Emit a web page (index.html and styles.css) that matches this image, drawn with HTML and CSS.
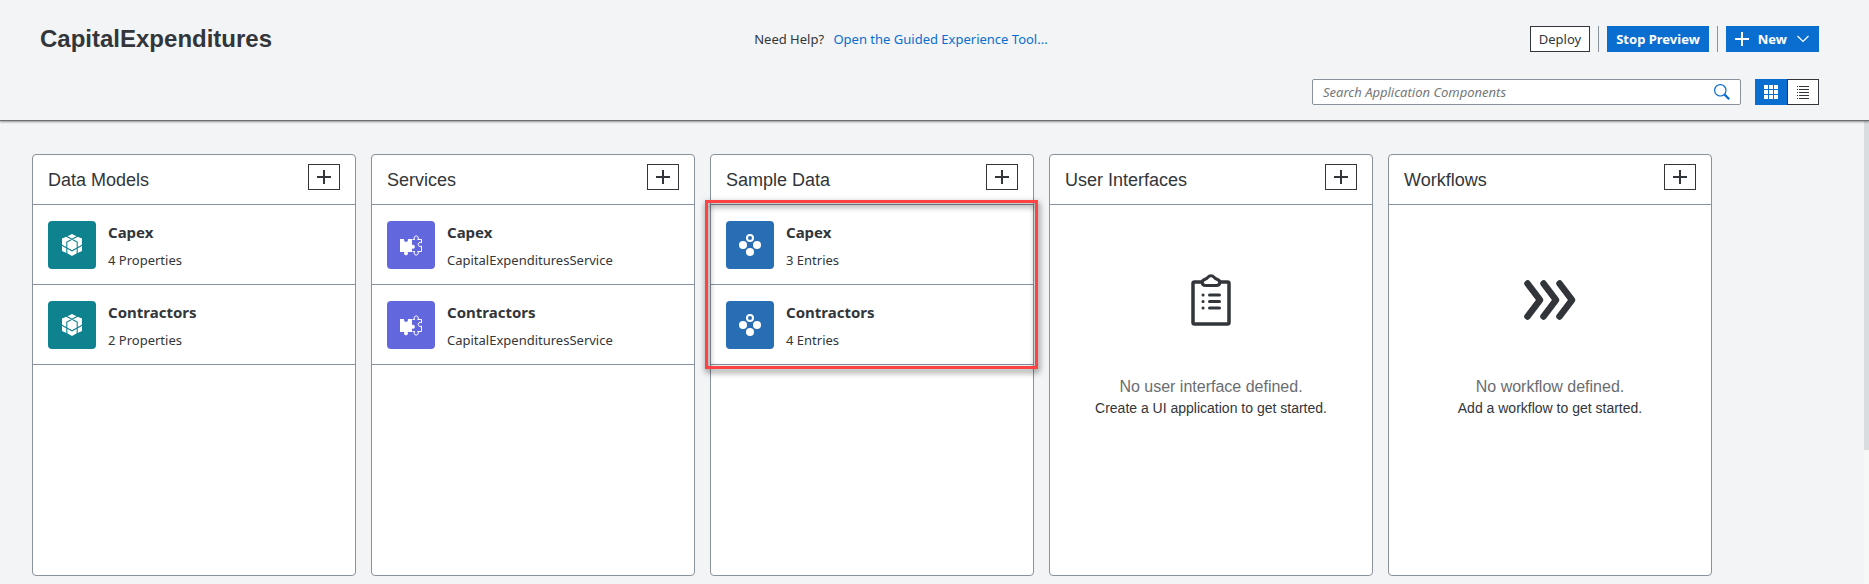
FILE: index.html
```html
<!DOCTYPE html>
<html lang="en">
<head>
<meta charset="utf-8">
<title>CapitalExpenditures</title>
<link rel="stylesheet" href="styles.css">
</head>
<body>
<svg class="defs" aria-hidden="true">
  <symbol id="plus" viewBox="0 0 14 14"><path d="M7 0v14M0 7h14" fill="none" stroke="currentColor" stroke-width="2"/></symbol>
  <symbol id="cube" viewBox="0 0 48 48">
    <path d="M24 13l4.500 2.200L34 17.500V30l-5 2.200L24 35l-5-2.800-5-2.200V17.500l5.500-2.300z" fill="#fff"/>
    <path d="M17.500 14.800L24 18.200l5.200 2.900v5.800L24 29.800l-5.200-2.900v-5.800L24 18.200l6.500-3.400M18.800 26.900v6M29.200 26.900v6M18.800 26.900L13.500 24M29.200 26.900L34.500 24" fill="none" stroke="#0f828f" stroke-width="1.100"/>
  </symbol>
  <symbol id="puzzle" viewBox="0 0 48 48">
    <path d="M13 18h4.200a2 2 0 1 0 3.600 0H25v6a2 2 0 1 1 0 3.600V31h-4.400a2 2 0 1 1-3.200 0H13z" fill="#fff"/>
    <path d="M25.500 18.500h2.200a2.100 2.100 0 1 1 3 0h3.800v3.200a2.100 2.100 0 1 0 0 3.400v5.400h-3.800a2.100 2.100 0 1 1-3 0h-2.200" fill="none" stroke="#fff" stroke-width="1"/>
  </symbol>
  <symbol id="entries" viewBox="0 0 48 48">
    <g fill="#fff"><circle cx="17" cy="24" r="4"/><circle cx="31" cy="24" r="4"/><circle cx="24" cy="31" r="4"/></g>
    <circle cx="24" cy="17" r="3" fill="none" stroke="#fff" stroke-width="2"/>
  </symbol>
</svg>

<header class="topbar">
  <div class="topbar-row">
    <h1 class="app-title">CapitalExpenditures</h1>
    <p class="help">Need Help? <a class="help-link" href="#">Open the Guided Experience Tool...</a></p>
    <div class="actions">
      <button class="btn" type="button">Deploy</button>
      <span class="sep"></span>
      <button class="btn btn-primary" type="button">Stop Preview</button>
      <span class="sep"></span>
      <button class="btn btn-primary btn-new" type="button">
        <svg class="plus" aria-hidden="true"><use href="#plus"/></svg>
        New
        <svg class="chevron" viewBox="0 0 14 8" aria-hidden="true"><path d="M1.500 1L7 6.500 12.500 1" fill="none" stroke="currentColor" stroke-width="1.200"/></svg>
      </button>
    </div>
  </div>
  <div class="tools">
    <div class="search">
      <input class="search-input" type="text" aria-label="Search Application Components" placeholder="Search Application Components">
      <button class="search-btn" type="button" aria-label="Search">
        <svg class="search-icon" viewBox="0 0 16 16" aria-hidden="true"><circle cx="6.300" cy="6.300" r="5.700" fill="none" stroke="currentColor" stroke-width="1.200"/><path d="M10.400 10.400l4.800 4.800" stroke="currentColor" stroke-width="2.200"/></svg>
      </button>
    </div>
    <div class="views">
      <button class="view view-on" type="button" aria-label="Grid view">
        <svg class="view-icon" viewBox="0 0 14 14" aria-hidden="true"><path d="M0 0h4v4H0zM5 0h4v4H5zM10 0h4v4h-4zM0 5h4v4H0zM5 5h4v4H5zM10 5h4v4h-4zM0 10h4v4H0zM5 10h4v4H5zM10 10h4v4h-4z" fill="currentColor"/></svg>
      </button>
      <button class="view" type="button" aria-label="List view">
        <svg class="view-icon" viewBox="0 0 14 14" aria-hidden="true"><path d="M1 1.500h1M3 1.500h10M1 4.500h1M3 4.500h10M1 7.500h1M3 7.500h10M1 10.500h1M3 10.500h10M1 13.500h1M3 13.500h10" stroke="currentColor"/></svg>
      </button>
    </div>
  </div>
</header>

<main class="board">
  <section class="card">
    <div class="card-head"><h2 class="card-title">Data Models</h2><button class="add" type="button" aria-label="Add data model"><svg class="plus" aria-hidden="true"><use href="#plus"/></svg></button></div>
    <ul class="list">
      <li class="item"><svg class="tile tile-model" aria-hidden="true"><use href="#cube"/></svg><div class="item-text"><h3 class="item-name">Capex</h3><p class="item-info">4 Properties</p></div></li>
      <li class="item"><svg class="tile tile-model" aria-hidden="true"><use href="#cube"/></svg><div class="item-text"><h3 class="item-name">Contractors</h3><p class="item-info">2 Properties</p></div></li>
    </ul>
  </section>
  <section class="card">
    <div class="card-head"><h2 class="card-title">Services</h2><button class="add" type="button" aria-label="Add service"><svg class="plus" aria-hidden="true"><use href="#plus"/></svg></button></div>
    <ul class="list">
      <li class="item"><svg class="tile tile-service" aria-hidden="true"><use href="#puzzle"/></svg><div class="item-text"><h3 class="item-name">Capex</h3><p class="item-info">CapitalExpendituresService</p></div></li>
      <li class="item"><svg class="tile tile-service" aria-hidden="true"><use href="#puzzle"/></svg><div class="item-text"><h3 class="item-name">Contractors</h3><p class="item-info">CapitalExpendituresService</p></div></li>
    </ul>
  </section>
  <section class="card">
    <div class="card-head"><h2 class="card-title">Sample Data</h2><button class="add" type="button" aria-label="Add sample data"><svg class="plus" aria-hidden="true"><use href="#plus"/></svg></button></div>
    <ul class="list list-marked">
      <li class="item"><svg class="tile tile-data" aria-hidden="true"><use href="#entries"/></svg><div class="item-text"><h3 class="item-name">Capex</h3><p class="item-info">3 Entries</p></div></li>
      <li class="item"><svg class="tile tile-data" aria-hidden="true"><use href="#entries"/></svg><div class="item-text"><h3 class="item-name">Contractors</h3><p class="item-info">4 Entries</p></div></li>
    </ul>
  </section>
  <section class="card">
    <div class="card-head"><h2 class="card-title">User Interfaces</h2><button class="add" type="button" aria-label="Add user interface"><svg class="plus" aria-hidden="true"><use href="#plus"/></svg></button></div>
    <div class="empty">
      <svg class="empty-icon" viewBox="0 0 56 56" aria-hidden="true">
        <g fill="none" stroke="currentColor" stroke-linejoin="round" stroke-linecap="round">
          <path d="M19 10h-7.500a1.500 1.500 0 0 0-1.500 1.500v39a1.500 1.500 0 0 0 1.500 1.500h33a1.500 1.500 0 0 0 1.500-1.500v-39a1.500 1.500 0 0 0-1.500-1.500H37" stroke-width="3.500"/>
          <path d="M22.500 13.500h11c4 0 4.500-4.500 1-6-2-.800-2.500-1-3.300-2.200-1.700-2.200-4.700-2.200-6.400 0-.8 1.200-1.300 1.400-3.300 2.200-3.500 1.500-3 6 1 6z" stroke-width="3"/>
          <path d="M26.500 23h10M26.500 29.500h10M26.500 36h10M20 23h.1M20 29.500h.1M20 36h.1" stroke-width="3"/>
        </g>
      </svg>
      <p class="empty-title">No user interface defined.</p>
      <p class="empty-hint">Create a UI application to get started.</p>
    </div>
  </section>
  <section class="card">
    <div class="card-head"><h2 class="card-title">Workflows</h2><button class="add" type="button" aria-label="Add workflow"><svg class="plus" aria-hidden="true"><use href="#plus"/></svg></button></div>
    <div class="empty">
      <svg class="empty-icon" viewBox="0 0 56 56" aria-hidden="true"><path d="M5.500 11.500L18 28 5.500 44.500M21.500 11.500L34 28 21.500 44.500M37.500 11.500L50 28 37.500 44.500" fill="none" stroke="currentColor" stroke-width="6.500" stroke-linecap="round" stroke-linejoin="round"/></svg>
      <p class="empty-title">No workflow defined.</p>
      <p class="empty-hint">Add a workflow to get started.</p>
    </div>
  </section>
  <div class="scrollbar"><div class="thumb"></div></div>
</main>
</body>
</html>
```

FILE: styles.css
```css
* {
  box-sizing: border-box;
}

body {
  margin: 0;
  min-height: 100vh;
  display: flex;
  flex-direction: column;
  background: #f2f4f5;
  color: #32363a;
  font-family: "Noto Sans", sans-serif;
  font-size: 13px;
  line-height: 20px;
}

h1, h2, h3, p, ul {
  margin: 0;
  padding: 0;
}

button {
  margin: 0;
  padding: 0;
  font: inherit;
  color: inherit;
}

.defs {
  position: absolute;
  width: 0;
  height: 0;
}

.topbar {
  display: flex;
  flex-direction: column;
  gap: 27px;
  padding: 26px 50px 15px 40px;
  border-bottom: 1px solid #6c6e70;
  box-shadow: 0 1px 2px rgba(0, 0, 0, 0.4);
  position: relative;
}

.topbar-row {
  display: flex;
  align-items: center;
  justify-content: space-between;
}

.app-title {
  font: bold 24px/26px "Liberation Sans", Arial, sans-serif;
}

.help-link {
  margin-left: 6px;
  color: #0a6ed1;
  text-decoration: none;
}

.actions {
  display: flex;
  gap: 8px;
}

.btn {
  height: 26px;
  padding: 0 8px;
  border: 1px solid #32363a;
  background: #fff;
}

.btn-primary {
  border-color: #0a6ed1;
  background: #0a6ed1;
  color: #fff;
  font-weight: bold;
}

.btn-new {
  display: flex;
  align-items: center;
  gap: 9px;
}

.sep {
  width: 1px;
  background: #89919a;
}

.plus {
  width: 14px;
  height: 14px;
  display: block;
}

.chevron {
  width: 14px;
  height: 8px;
}

.tools {
  display: flex;
  justify-content: flex-end;
  gap: 14px;
}

.search {
  display: flex;
  align-items: center;
  flex: 0 1 429px;
  height: 26px;
  padding: 0 10px;
  border: 1px solid #89919a;
  border-radius: 2px;
  background: #fff;
}

.search-input {
  flex: 1;
  min-width: 0;
  padding: 0;
  border: 0;
  outline: 0;
  background: transparent;
  font: inherit;
  color: inherit;
}

.search-input::placeholder {
  color: #74777a;
  font-style: italic;
}

.search-btn {
  border: 0;
  background: transparent;
  color: #0a6ed1;
}

.search-icon {
  display: block;
  width: 16px;
  height: 16px;
}

.views {
  display: flex;
}

.view {
  display: grid;
  place-items: center;
  width: 32px;
  height: 26px;
  border: 1px solid #32363a;
  background: #fff;
}

.view-on {
  border-color: #0a6ed1;
  background: #0a6ed1;
  color: #fff;
}

.view-icon {
  width: 14px;
  height: 14px;
}

.board {
  flex: 1;
  display: flex;
  gap: 15px;
  padding: 33px 0 8px 32px;
}

.card {
  flex: 0 0 324px;
  min-height: 422px;
  display: flex;
  flex-direction: column;
  border: 1px solid #89919a;
  border-radius: 4px;
  background: #fff;
}

.card-head {
  display: flex;
  align-items: flex-start;
  justify-content: space-between;
  height: 50px;
  padding: 9px 15px;
  border-bottom: 1px solid #89919a;
}

.card-title {
  font: 18px/32px "Liberation Sans", Arial, sans-serif;
}

.add {
  display: grid;
  place-items: center;
  width: 32px;
  height: 26px;
  border: 1px solid #32363a;
  background: #fff;
}

.list {
  list-style: none;
}

.list-marked {
  position: relative;
}

.list-marked::after {
  content: "";
  position: absolute;
  inset: -5px -5px -4px -6px;
  border: 3px solid #ff4343;
  filter: drop-shadow(1px 3px 3px rgba(0, 0, 0, 0.6));
  pointer-events: none;
}

.item {
  display: flex;
  gap: 12px;
  height: 80px;
  padding: 16px 15px;
  border-bottom: 1px solid #89919a;
}

.tile {
  width: 48px;
  height: 48px;
  border-radius: 4px;
}

.tile-model {
  background: #0f828f;
}

.tile-service {
  background: #6367de;
}

.tile-data {
  background: #286eb4;
}

.item-text {
  display: flex;
  flex-direction: column;
  gap: 7px;
}

.item-name {
  font-size: 15px;
  line-height: 22px;
}

.empty {
  display: flex;
  flex-direction: column;
  align-items: center;
  padding-top: 67px;
  font-family: "Liberation Sans", Arial, sans-serif;
}

.empty-icon {
  width: 56px;
  height: 56px;
  margin-bottom: 48px;
}

.empty-title {
  color: #6a6d70;
  font-size: 16px;
  line-height: 22px;
}

.empty-hint {
  font-size: 14px;
  line-height: 20px;
}

.scrollbar {
  width: 5px;
  margin: -33px 0 -8px auto;
  background: #f6f8f8;
}

.thumb {
  height: 71%;
  background: #d9dde0;
}
```
